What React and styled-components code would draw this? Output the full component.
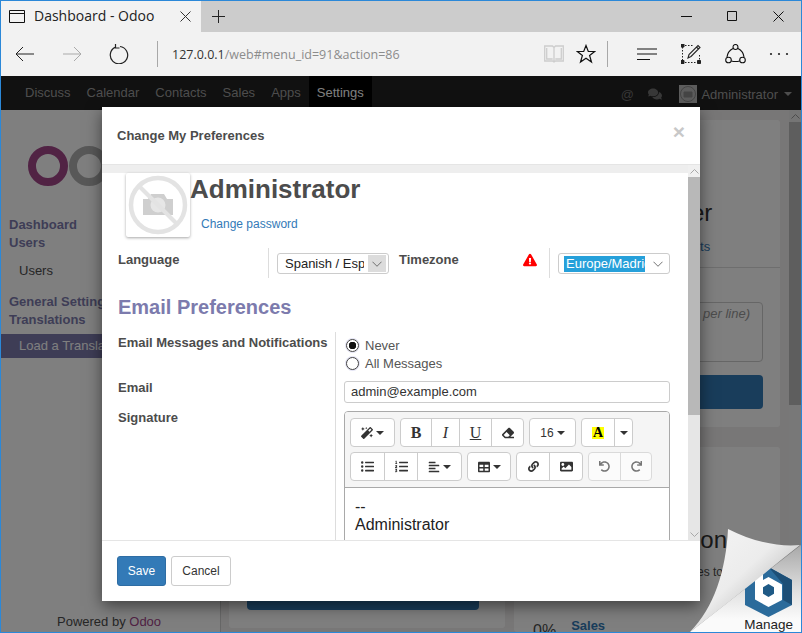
import React from 'react';
import styled, { createGlobalStyle } from 'styled-components';
import {
  FaMagic, FaEraser, FaListUl, FaListOl, FaAlignLeft, FaTable, FaLink, FaImage,
  FaUndo, FaRedo, FaComments, FaExclamationTriangle,
} from 'react-icons/fa';

const GlobalStyle = createGlobalStyle`
  html, body { margin: 0; padding: 0; overflow: hidden; }
  * { box-sizing: border-box; }
  body { font-family: "Liberation Sans", Arial, sans-serif; font-size: 13px; color: #4c4c4c; }
`;

const App = () => (
  <Frame>
    <GlobalStyle />
    <TabBar>
      <Tab>
        <svg width="17" height="13" viewBox="0 0 17 13" fill="none" stroke="#111">
          <path d="M.5.5h15v12H.5zM.5 3.5h15" />
        </svg>
        <TabTitle>Dashboard - Odoo</TabTitle>
        <svg width="11" height="11" viewBox="0 0 11 11" stroke="#333">
          <path d="M.5.5l10 10M10.5.5l-10 10" />
        </svg>
      </Tab>
      <NewTab>
        <svg width="13" height="13" viewBox="0 0 13 13" stroke="#222">
          <path d="M6.5 0v13M0 6.5h13" />
        </svg>
      </NewTab>
      <WindowControls>
        <svg width="11" height="11" viewBox="0 0 11 11" stroke="#111"><path d="M0 5.5h11" /></svg>
        <svg width="11" height="11" viewBox="0 0 11 11" fill="none" stroke="#111"><path d="M.5.5h9v9h-9z" /></svg>
        <svg width="11" height="11" viewBox="0 0 11 11" stroke="#111"><path d="M.5.5l10 10M10.5.5l-10 10" /></svg>
      </WindowControls>
    </TabBar>

    <Toolbar>
      <ToolButton>
        <svg width="20" height="16" viewBox="0 0 20 16" fill="none" stroke="#222"><path d="M19 8H1M8 1L1 8l7 7" /></svg>
      </ToolButton>
      <ToolButton>
        <svg width="20" height="16" viewBox="0 0 20 16" fill="none" stroke="#aaa"><path d="M1 8h18M12 1l7 7-7 7" /></svg>
      </ToolButton>
      <ToolButton>
        <svg width="20" height="20" viewBox="0 0 20 20" fill="none" stroke="#222" strokeWidth="1.2">
          <path d="M6 3.4a8.700 8.700 0 1 0 5-.9M6.500 0v4h4" />
        </svg>
      </ToolButton>
      <ToolDivider />
      <Address><b>127.0.0.1</b>/web#menu_id=91&action=86</Address>
      <svg width="20" height="18" viewBox="0 0 20 18" fill="none" stroke="#cdcdcd" strokeWidth="1.3">
        <path d="M.7 1h7.800L10 2.500 11.500 1h7.800v15h-7.800L10 17l-1.500-1H.7zM10 2.500V17M2.700 3v11h6M17.300 3v11h-6" />
      </svg>
      <StarWrap>
        <svg width="20" height="20" viewBox="0 0 20 20" fill="none" stroke="#111" strokeWidth="1.2">
          <path d="M10 1.500l2.300 6h6.400l-5.100 4 1.900 6.500L10 14.200 4.500 18l1.900-6.500-5.100-4h6.400z" />
        </svg>
      </StarWrap>
      <ToolDivider $narrow />
      <IconSlot>
        <svg width="21" height="13" viewBox="0 0 21 13" stroke="#111" strokeWidth="1.2"><path d="M0 1h20M0 6h20M0 11.500h13" /></svg>
      </IconSlot>
      <IconSlot>
        <svg width="20" height="20" viewBox="0 0 20 20" fill="none" stroke="#222">
          <path d="M1.500 3v14M4 18.500h12.500M18.500 11v6M4 1.500h8" strokeDasharray="1.500 1.500" />
          <path d="M7 14l1-3.500L17 1.500l2 2-9 9zM15.500 3l2 2" strokeWidth="1.1" />
          <path d="M0 0h3v3H0zM0 16.500h3v3H0zM16.500 16.500h3v3h-3z" fill="#222" />
        </svg>
      </IconSlot>
      <IconSlot>
        <svg width="21" height="20" viewBox="0 0 21 20" fill="none" stroke="#111" strokeWidth="1.1">
          <circle cx="10.500" cy="3" r="2.500" />
          <circle cx="3.500" cy="16" r="2.800" />
          <circle cx="17.500" cy="16" r="2.800" />
          <path d="M8 4.500C5 6 2.500 9 2 13M13 4.500c3 1.500 5.500 4.500 6 8.500M6.300 17c3 .8 5.500.8 8.400 0" />
        </svg>
      </IconSlot>
      <IconSlot>
        <svg width="20" height="4" viewBox="0 0 20 4" fill="#222">
          <circle cx="2" cy="2" r="1.100" />
          <circle cx="10" cy="2" r="1.100" />
          <circle cx="18" cy="2" r="1.100" />
        </svg>
      </IconSlot>
    </Toolbar>

    <Page>
      <Navbar>
        <NavLink>Discuss</NavLink>
        <NavLink>Calendar</NavLink>
        <NavLink>Contacts</NavLink>
        <NavLink>Sales</NavLink>
        <NavLink>Apps</NavLink>
        <NavLink $active>Settings</NavLink>
        <NavRight>
          <NavIcon>@</NavIcon>
          <NavIcon><FaComments size={14} /></NavIcon>
          <NavAvatar>
            <svg width="18" height="18" viewBox="0 0 18 18" fill="none" stroke="#8a8a8a">
              <circle cx="9" cy="9" r="7.500" />
              <path d="M5 7h8v5H5z" fill="#8a8a8a" />
            </svg>
          </NavAvatar>
          <span>Administrator</span>
          <NavCaret />
        </NavRight>
      </Navbar>

      <Workspace>
        <Sidebar>
          <Logo>
            <svg width="90" height="44" viewBox="0 0 90 44" fill="none" strokeWidth="8">
              <circle cx="23" cy="22" r="16" stroke="#a24689" />
              <circle cx="64" cy="22" r="16" stroke="#b0b0b0" />
            </svg>
          </Logo>
          <SideHead>Dashboard</SideHead>
          <SideHead>Users</SideHead>
          <SideItem>Users</SideItem>
          <SideHead $spaced>General Settings</SideHead>
          <SideHead>Translations</SideHead>
          <SideItem $active>Load a Translation</SideItem>
          <Powered>Powered by <b>Odoo</b></Powered>
        </Sidebar>
        <Board>
          <BoardColumn $w={276}>
            <Card $grow $lifted>
              <Spacer />
              <WideButton $low />
            </Card>
          </BoardColumn>
          <BoardColumn $w={266}>
            <Card $height={307}>
              <Stat>Active User</Stat>
              <StatLink>Manage access rights</StatLink>
              <CardRule />
              <FakeArea>Enter e-mail address (one per line)</FakeArea>
              <WideButton />
            </Card>
            <Card $grow>
              <Impl>Implementation</Impl>
              <ImplText>Follow these implementation guides to get the most out of Odoo.</ImplText>
              <Spacer />
              <Progress><span>0%</span><a>Sales</a></Progress>
            </Card>
          </BoardColumn>
        </Board>
        <PageScroll>
          <ScrollCap $dark>
            <svg width="9" height="5" viewBox="0 0 9 5" fill="none" stroke="#999"><path d="M.5 4.500l4-4 4 4" /></svg>
          </ScrollCap>
          <PageThumb />
        </PageScroll>
      </Workspace>

      <Backdrop />

      <Modal>
        <ModalHeader>
          <ModalTitle>Change My Preferences</ModalTitle>
          <CloseMark>×</CloseMark>
        </ModalHeader>
        <ModalMiddle>
          <ModalScrollArea>
            <Band />
            <Identity>
              <Avatar>
                <svg width="60" height="60" viewBox="0 0 60 60" fill="none">
                  <path d="M15 24h5l3-5h13l3 5h6v16H15z" fill="#cfcfcf" />
                  <circle cx="30" cy="30" r="7.500" fill="#e6e6e6" />
                  <circle cx="30" cy="30" r="27" stroke="#e3e3e3" strokeWidth="4.500" />
                  <path d="M11 11l38 38" stroke="#e3e3e3" strokeWidth="4" />
                </svg>
              </Avatar>
              <IdentityText>
                <UserName>Administrator</UserName>
                <PasswordLink>Change password</PasswordLink>
              </IdentityText>
            </Identity>

            <LocaleRow>
              <FieldLabel>Language</FieldLabel>
              <LocaleCell>
                <SelectBox>
                  <SelectText>Spanish / Español</SelectText>
                  <SelectArrow $boxed><Chevron /></SelectArrow>
                </SelectBox>
              </LocaleCell>
              <TimezoneLabel>
                <FieldLabel>Timezone</FieldLabel>
                <FaExclamationTriangle size={14} color="#f00" />
              </TimezoneLabel>
              <LocaleCell>
                <SelectBox>
                  <SelectText $selected>Europe/Madrid</SelectText>
                  <SelectArrow><Chevron /></SelectArrow>
                </SelectBox>
              </LocaleCell>
            </LocaleRow>

            <SectionTitle>Email Preferences</SectionTitle>

            <FormGrid>
              <FieldLabel $mid>Email Messages and Notifications</FieldLabel>
              <ValueCell>
                <RadioRow><Radio $checked />Never</RadioRow>
                <RadioRow><Radio />All Messages</RadioRow>
              </ValueCell>
              <FieldLabel $tight>Email</FieldLabel>
              <ValueCell>
                <TextField>admin@example.com</TextField>
              </ValueCell>
              <FieldLabel $tight>Signature</FieldLabel>
              <ValueCell>
                <Editor>
                  <EditorBar>
                    <BarRow>
                      <BarGroup><BarButton $w={43}><FaMagic size={12} /><Caret /></BarButton></BarGroup>
                      <BarGroup>
                        <BarButton $w={30}><SerifGlyph $bold>B</SerifGlyph></BarButton>
                        <BarButton $w={28}><SerifGlyph $italic>I</SerifGlyph></BarButton>
                        <BarButton $w={32}><SerifGlyph $under>U</SerifGlyph></BarButton>
                        <BarButton $w={32}><FaEraser size={12} /></BarButton>
                      </BarGroup>
                      <BarGroup><BarButton $w={45}>16<Caret /></BarButton></BarGroup>
                      <BarGroup>
                        <BarButton $w={32}><ColorGlyph>A</ColorGlyph></BarButton>
                        <BarButton $w={18}><Caret /></BarButton>
                      </BarGroup>
                    </BarRow>
                    <BarRow>
                      <BarGroup>
                        <BarButton $w={33}><FaListUl size={13} /></BarButton>
                        <BarButton $w={33}><FaListOl size={13} /></BarButton>
                        <BarButton $w={44}><FaAlignLeft size={12} /><Caret /></BarButton>
                      </BarGroup>
                      <BarGroup><BarButton $w={42}><FaTable size={12} /><Caret /></BarButton></BarGroup>
                      <BarGroup>
                        <BarButton $w={32}><FaLink size={11} /></BarButton>
                        <BarButton $w={33}><FaImage size={13} /></BarButton>
                      </BarGroup>
                      <BarGroup $disabled>
                        <BarButton $w={31}><FaUndo size={11} /></BarButton>
                        <BarButton $w={31}><FaRedo size={11} /></BarButton>
                      </BarGroup>
                    </BarRow>
                  </EditorBar>
                  <EditorBody>
                    <div>--</div>
                    <div>Administrator</div>
                  </EditorBody>
                </Editor>
              </ValueCell>
            </FormGrid>
          </ModalScrollArea>
          <ModalScroll>
            <ScrollCap>
              <svg width="9" height="5" viewBox="0 0 9 5" fill="none" stroke="#a8a8a8"><path d="M.5 4.500l4-4 4 4" /></svg>
            </ScrollCap>
            <ModalThumb />
            <ScrollTrack>
              <svg width="9" height="5" viewBox="0 0 9 5" fill="none" stroke="#a8a8a8"><path d="M.5.500l4 4 4-4" /></svg>
            </ScrollTrack>
          </ModalScroll>
        </ModalMiddle>
        <ModalFooter>
          <SaveButton>Save</SaveButton>
          <CancelButton>Cancel</CancelButton>
        </ModalFooter>
      </Modal>

      <PageCurl>
        <svg width="120" height="112" viewBox="0 0 120 112">
          <defs>
            <linearGradient id="revealed" x1="0" y1="0" x2="0" y2="1">
              <stop offset="0" stopColor="#a8a8a8" />
              <stop offset=".55" stopColor="#e2e2e2" />
              <stop offset=".85" stopColor="#fafafa" />
            </linearGradient>
            <linearGradient id="flap" x1="0" y1="0" x2="1" y2="1">
              <stop offset="0" stopColor="#f6f6f6" />
              <stop offset=".45" stopColor="#ececec" />
              <stop offset=".75" stopColor="#bdbdbd" />
              <stop offset="1" stopColor="#d8d8d8" />
            </linearGradient>
          </defs>
          <path d="M120 25L9 112h111z" fill="url(#revealed)" />
          <path d="M64 60l23.500-13L111 60v25L87.500 97 64 85z" fill="#2b6b9b" />
          <path d="M87.500 47L111 60v25l-9-5V64z" fill="#1d4f77" />
          <path d="M75 55l7-4v9l5.500-3 13.500 7.500v15.500L87.500 87 74 79.500V56z" fill="#fff" />
          <path d="M87.500 64l5.500 3.200v6.600L87.500 77 82 73.800v-6.600z" fill="#1f5a86" />
          <path d="M47 9C45 50 33 88 9 112 45 85 85 52 119 25 98 27 72 22 47 9z" fill="url(#flap)" />
        </svg>
        <ManageLabel>Manage</ManageLabel>
      </PageCurl>
    </Page>
  </Frame>
);

export default App;

const Chevron = () => (
  <svg width="10" height="6" viewBox="0 0 11 6" fill="none" stroke="#666"><path d="M.5.500l5 5 5-5" /></svg>
);

const Frame = styled.div`
  width: 802px;
  height: 633px;
  border: 1px solid #2b88d8;
  display: flex;
  flex-direction: column;
  overflow: hidden;
  background: #f2f2f2;
`;

const TabBar = styled.div`
  height: 31px;
  display: flex;
  background: #cccccc;
`;

const Tab = styled.div`
  width: 200px;
  display: flex;
  align-items: center;
  padding: 0 10px 0 8px;
  background: #f2f2f2;
`;

const TabTitle = styled.span`
  flex: 1;
  margin: -2px 0 0 8px;
  font: 14px "Open Sans", sans-serif;
  color: #222;
`;

const NewTab = styled.div`
  width: 46px;
  display: flex;
  align-items: center;
  justify-content: center;
  margin-left: -12px;
  padding-left: 12px;
`;

const WindowControls = styled.div`
  margin-left: auto;
  display: flex;
  align-items: center;
  gap: 35px;
  padding-right: 17px;
`;

const Toolbar = styled.div`
  height: 44px;
  display: flex;
  align-items: center;
  background: #f2f2f2;
`;

const ToolButton = styled.div`
  width: 47px;
  display: flex;
  justify-content: center;
`;

const ToolDivider = styled.div`
  width: 1px;
  height: 26px;
  flex: none;
  background: #a8a8a8;
  margin: ${(p) => (p.$narrow ? '0 17px 0 11px' : '0 0 0 15px')};
`;

const Address = styled.div`
  flex: 1;
  margin-left: 14px;
  font: 12.5px "Open Sans", sans-serif;
  color: #8c8c8c;
  b { font-weight: 400; color: #333; }
`;

const StarWrap = styled.div`
  margin-left: 12px;
  display: flex;
`;

const IconSlot = styled.div`
  width: 44px;
  flex: none;
  display: flex;
  justify-content: center;
`;

const Page = styled.div`
  position: relative;
  flex: 1;
  min-height: 0;
  display: flex;
  flex-direction: column;
  background: #f0eeee;
`;

const Navbar = styled.div`
  height: 34px;
  flex: none;
  display: flex;
  align-items: stretch;
  padding-left: 16px;
  background: #222;
  color: #9d9d9d;
`;

const NavLink = styled.div`
  display: flex;
  align-items: center;
  padding: 0 8px;
  height: 32px;
  color: ${(p) => (p.$active ? '#fff' : '#9d9d9d')};
  background: ${(p) => (p.$active ? '#000' : 'transparent')};
`;

const NavRight = styled.div`
  margin-left: auto;
  height: 34px;
  display: flex;
  align-items: center;
  padding: 2px 9px 0 0;
  svg { flex: none; }
`;

const NavIcon = styled.div`
  width: 14px;
  margin-right: 14px;
  display: flex;
  justify-content: center;
  color: #707070;
`;

const NavAvatar = styled.div`
  width: 18px;
  height: 18px;
  margin: 0 4px 0 3px;
  display: flex;
  background: #bbb;
`;

const NavCaret = styled.span`
  margin-left: 6px;
  border-top: 4px solid #9d9d9d;
  border-left: 4px solid transparent;
  border-right: 4px solid transparent;
`;

const Workspace = styled.div`
  flex: 1;
  min-height: 0;
  display: flex;
`;

const Sidebar = styled.div`
  width: 220px;
  flex: none;
  display: flex;
  flex-direction: column;
  background: #fff;
  border-right: 1px solid #cfcfcf;
  overflow: hidden;
`;

const Logo = styled.div`
  height: 106px;
  padding: 34px 0 0 24px;
`;

const SideHead = styled.div`
  height: 18px;
  padding-left: 8px;
  line-height: 18px;
  font-weight: bold;
  color: #7c7bad;
  white-space: nowrap;
  margin-top: ${(p) => (p.$spaced ? '10px' : '0')};
`;

const SideItem = styled.div`
  height: 24px;
  margin-top: ${(p) => (p.$active ? '5px' : '7px')};
  padding-left: 18px;
  line-height: 24px;
  color: ${(p) => (p.$active ? '#fff' : '#4c4c4c')};
  background: ${(p) => (p.$active ? '#7c7bad' : 'transparent')};
`;

const Powered = styled.div`
  margin-top: auto;
  padding-left: 56px;
  height: 20px;
  line-height: 20px;
  b { font-weight: 400; color: #a24689; }
`;

const Board = styled.div`
  flex: 1;
  min-width: 0;
  display: flex;
  gap: 9px;
  padding: 10px 0 0 8px;
  background: #f0eeee;
`;

const BoardColumn = styled.div`
  width: ${(p) => p.$w}px;
  display: flex;
  flex-direction: column;
  gap: 20px;
`;

const Card = styled.div`
  flex: ${(p) => (p.$grow ? 1 : 'none')};
  height: ${(p) => (p.$height ? `${p.$height}px` : 'auto')};
  margin-bottom: ${(p) => (p.$lifted ? '4px' : '0')};
  display: flex;
  flex-direction: column;
  min-height: 0;
  background: #fff;
  border-radius: 3px;
  padding: 0 17px;
`;

const Spacer = styled.div`
  flex: 1;
`;

const WideButton = styled.div`
  height: 34px;
  flex: none;
  border-radius: 4px;
  background: #337ab7;
  margin: ${(p) => (p.$low ? '0 9px 18px 1px' : '0')};
`;

const Stat = styled.div`
  margin: 78px -8px 0 0;
  text-align: center;
  font-size: 24px;
  line-height: 30px;
  color: #333;
`;

const StatLink = styled.div`
  margin-top: 11px;
  text-align: center;
  color: #337ab7;
`;

const CardRule = styled.div`
  height: 1px;
  margin: 13px -17px 34px;
  background: #ddd;
`;

const FakeArea = styled.div`
  height: 60px;
  margin-bottom: 13px;
  padding: 3px 12px;
  border: 1px solid #ccc;
  border-radius: 4px;
  font-style: italic;
  color: #999;
  text-align: right;
  white-space: nowrap;
`;

const Impl = styled.div`
  margin: 78px 4px 0 0;
  text-align: center;
  font-size: 24px;
  line-height: 30px;
  color: #333;
`;

const ImplText = styled.div`
  margin: 10px 16px 0 -16px;
  text-align: center;
  font-size: 12px;
  line-height: 15px;
`;

const Progress = styled.div`
  display: flex;
  align-items: flex-start;
  gap: 15px;
  height: 16px;
  margin-bottom: -2px;
  span { font-size: 16px; margin: 4px 0 0 2px; }
  a { font-weight: bold; color: #337ab7; }
`;

const PageScroll = styled.div`
  width: 12px;
  flex: none;
  margin-left: auto;
  display: flex;
  flex-direction: column;
  background: #f0f0f0;
`;

const ScrollCap = styled.div`
  height: 12px;
  flex: none;
  display: flex;
  align-items: center;
  justify-content: center;
  background: ${(p) => (p.$dark ? '#eaeaea' : '#f0f0f0')};
`;

const PageThumb = styled.div`
  height: 283px;
  background: #bcbcbc;
`;

const Backdrop = styled.div`
  position: absolute;
  inset: 0;
  background: rgba(0, 0, 0, 0.5);
`;

const Modal = styled.div`
  position: absolute;
  left: 101px;
  top: 31px;
  width: 598px;
  height: 494px;
  display: flex;
  flex-direction: column;
  background: #fff;
  box-shadow: 0 5px 15px rgba(0, 0, 0, 0.5);
`;

const ModalHeader = styled.div`
  height: 58px;
  flex: none;
  display: flex;
  align-items: center;
  justify-content: space-between;
  padding: 0 15px;
  border-bottom: 1px solid #e5e5e5;
`;

const ModalTitle = styled.div`
  font-weight: bold;
  font-size: 13px;
`;

const CloseMark = styled.div`
  margin-top: -7px;
  font-weight: bold;
  font-size: 21px;
  color: #c8c8c8;
`;

const ModalMiddle = styled.div`
  flex: 1;
  min-height: 0;
  display: flex;
`;

const ModalScrollArea = styled.div`
  flex: 1;
  min-width: 0;
  overflow: hidden;
  padding: 0 18px 0 16px;
`;

const Band = styled.div`
  height: 8px;
  margin: 0 -18px 0 -16px;
  background: #eeeeee;
`;

const Identity = styled.div`
  display: flex;
  margin-left: 8px;
`;

const Avatar = styled.div`
  width: 64px;
  height: 64px;
  flex: none;
  display: flex;
  align-items: center;
  justify-content: center;
  border-radius: 2px;
  box-shadow: 0 1px 3px rgba(0, 0, 0, 0.35);
`;

const IdentityText = styled.div`
  display: flex;
  flex-direction: column;
`;

const UserName = styled.div`
  font-size: 26px;
  font-weight: bold;
  line-height: 30px;
  margin-top: 1px;
`;

const PasswordLink = styled.a`
  margin: 13px 0 0 11px;
  font-size: 12px;
  color: #337ab7;
`;

const LocaleRow = styled.div`
  display: grid;
  grid-template-columns: 150px 121px 160px 121px;
  height: 30px;
  margin-top: 11px;
`;

const FieldLabel = styled.div`
  padding-top: ${(p) => (p.$tight ? '2px' : p.$mid ? '3px' : '4px')};
  font-weight: bold;
  font-size: 13px;
  line-height: 15px;
`;

const LocaleCell = styled.div`
  border-left: 1px solid #ddd;
  padding: 5px 0 0 8px;
`;

const TimezoneLabel = styled.div`
  display: flex;
  justify-content: space-between;
  padding: 0 12px 0 10px;
  svg { margin-top: 5px; }
`;

const SelectBox = styled.div`
  height: 21px;
  display: flex;
  align-items: center;
  padding: 1px 2px 1px 7px;
  border: 1px solid #ccc;
  border-radius: 3px;
  overflow: hidden;
`;

const SelectText = styled.div`
  flex: 1;
  min-width: 0;
  overflow: hidden;
  white-space: nowrap;
  line-height: 16px;
  color: ${(p) => (p.$selected ? '#fff' : '#222')};
  background: ${(p) => (p.$selected ? '#26a0da' : 'transparent')};
  margin-left: ${(p) => (p.$selected ? '-2px' : '0')};
  padding-left: ${(p) => (p.$selected ? '2px' : '0')};
`;

const SelectArrow = styled.div`
  width: 18px;
  height: 17px;
  margin-left: 4px;
  flex: none;
  display: flex;
  align-items: center;
  justify-content: center;
  background: ${(p) => (p.$boxed ? '#dcdcdc' : 'transparent')};
`;

const SectionTitle = styled.div`
  margin-top: 17px;
  font-size: 20px;
  line-height: 24px;
  font-weight: bold;
  color: #7c7bad;
`;

const FormGrid = styled.div`
  display: grid;
  grid-template-columns: 217px 1fr;
  grid-template-rows: 46px 30px auto;
  margin-top: 13px;
`;

const ValueCell = styled.div`
  border-left: 1px solid #ddd;
  padding-left: 8px;
`;

const RadioRow = styled.div`
  display: flex;
  align-items: center;
  height: 18px;
  margin-left: 2px;
  color: #555;
  &:first-child { margin-top: 4px; }
`;

const Radio = styled.span`
  width: 13px;
  height: 13px;
  margin-right: 6px;
  flex: none;
  border: 1px solid #444;
  border-radius: 50%;
  background: ${(p) => (p.$checked ? 'radial-gradient(circle, #111 0 3.500px, #fff 4px)' : '#fff')};
  box-shadow: 0 0 0 1px #e4e4f4;
`;

const TextField = styled.div`
  height: 22px;
  margin-top: 3px;
  padding: 0 6px;
  line-height: 20px;
  border: 1px solid #ccc;
  border-radius: 3px;
  color: #333;
`;

const Editor = styled.div`
  margin-top: 3px;
  height: 160px;
  border: 1px solid #a9a9a9;
  border-radius: 4px 4px 0 0;
  overflow: hidden;
`;

const EditorBar = styled.div`
  height: 76px;
  display: flex;
  flex-direction: column;
  gap: 5px;
  padding: 6px 5px 0;
  background: #f5f5f5;
  border-bottom: 1px solid #a9a9a9;
`;

const BarRow = styled.div`
  display: flex;
  gap: 5px;
`;

const BarGroup = styled.div`
  display: flex;
  height: 29px;
  border: 1px solid #ccc;
  border-radius: 4px;
  background: #fff;
  overflow: hidden;
  opacity: ${(p) => (p.$disabled ? 0.65 : 1)};
`;

const BarButton = styled.div`
  width: ${(p) => p.$w}px;
  display: flex;
  align-items: center;
  justify-content: center;
  gap: 3px;
  font-size: 12px;
  color: #333;
  & + & { border-left: 1px solid #ccc; }
`;

const Caret = styled.span`
  border-top: 4px solid #333;
  border-left: 4px solid transparent;
  border-right: 4px solid transparent;
`;

const SerifGlyph = styled.span`
  font-family: "Liberation Serif", serif;
  font-size: 16px;
  font-weight: ${(p) => (p.$bold ? 'bold' : 'normal')};
  font-style: ${(p) => (p.$italic ? 'italic' : 'normal')};
  text-decoration: ${(p) => (p.$under ? 'underline' : 'none')};
`;

const ColorGlyph = styled.span`
  font-family: "Liberation Serif", serif;
  font-weight: bold;
  font-size: 14px;
  line-height: 12px;
  padding: 0 1px;
  background: #ff0;
  color: #000;
`;

const EditorBody = styled.div`
  padding: 10px;
  font-size: 16px;
  line-height: 18px;
  color: #222;
`;

const ModalScroll = styled.div`
  width: 12px;
  flex: none;
  display: flex;
  flex-direction: column;
  background: #e6e6e6;
`;

const ModalThumb = styled.div`
  height: 238px;
  flex: none;
  background: #b8b8b8;
`;

const ScrollTrack = styled.div`
  flex: 1;
  display: flex;
  align-items: flex-end;
  justify-content: center;
  padding-bottom: 3px;
`;

const ModalFooter = styled.div`
  height: 61px;
  flex: none;
  display: flex;
  align-items: center;
  gap: 5px;
  padding: 0 15px;
  border-top: 1px solid #e5e5e5;
`;

const SaveButton = styled.div`
  width: 49px;
  height: 30px;
  display: flex;
  align-items: center;
  justify-content: center;
  font-size: 12px;
  color: #fff;
  background: #337ab7;
  border: 1px solid #2e6da4;
  border-radius: 3px;
`;

const CancelButton = styled(SaveButton)`
  width: 60px;
  color: #333;
  background: #fff;
  border-color: #ccc;
`;

const PageCurl = styled.div`
  position: absolute;
  right: 0;
  bottom: 0;
  width: 120px;
  height: 112px;
  svg { display: block; }
`;

const ManageLabel = styled.div`
  position: absolute;
  right: 8px;
  bottom: 0;
  font-size: 13.5px;
  color: #222;
`;
